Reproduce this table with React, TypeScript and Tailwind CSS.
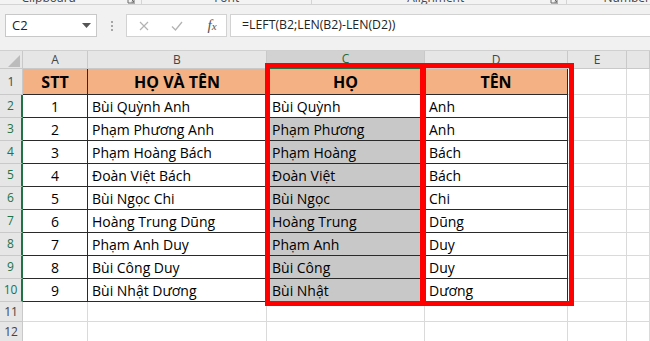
import React from "react";

const people: [string, string, string, string][] = [
  ["1", "Bùi Quỳnh Anh", "Bùi Quỳnh", "Anh"],
  ["2", "Phạm Phương Anh", "Phạm Phương", "Anh"],
  ["3", "Phạm Hoàng Bách", "Phạm Hoàng", "Bách"],
  ["4", "Đoàn Việt Bách", "Đoàn Việt", "Bách"],
  ["5", "Bùi Ngọc Chi", "Bùi Ngọc", "Chi"],
  ["6", "Hoàng Trung Dũng", "Hoàng Trung", "Dũng"],
  ["7", "Phạm Anh Duy", "Phạm Anh", "Duy"],
  ["8", "Bùi Công Duy", "Bùi Công", "Duy"],
  ["9", "Bùi Nhật Dương", "Bùi Nhật", "Dương"],
];

function Launcher() {
  return (
    <svg width="9" height="9" viewBox="0 0 9 9" className="-mt-[5px]">
      <path d="M1 1v7h7" fill="none" stroke="#6b6b6b" strokeWidth="1" />
      <path d="M3.5 3.5l3.5 3.5M7 4.5V7H4.5" fill="none" stroke="#6b6b6b" strokeWidth="1" />
    </svg>
  );
}

function RibbonLabels() {
  return (
    <div className="h-[5px] overflow-hidden bg-[#f3f3f3] border-b border-[#d4d4d4] flex text-[12px] leading-[14px] text-[#444]">
      <div className="w-[150px] flex items-start">
        <span className="flex-1 text-center -mt-[9px] pr-[30px]">Clipboard</span>
        <div className="w-[14px]"><Launcher /></div>
      </div>
      <div className="w-[180px] flex items-start justify-center border-l border-[#d4d4d4]">
        <span className="-mt-[9px]">Font</span>
      </div>
      <div className="w-[270px] flex items-start border-l border-[#d4d4d4]">
        <span className="flex-1 text-center -mt-[9px] pl-[10px]">Alignment</span>
        <div className="w-[16px]"><Launcher /></div>
      </div>
      <div className="flex-1 flex items-start border-l border-[#d4d4d4] pl-[37px]">
        <span className="-mt-[9px]">Number</span>
      </div>
    </div>
  );
}

function FormulaBar() {
  return (
    <div className="h-[45px] bg-[#f1f1f1] flex items-center pl-[5px] pb-[4px]">
      <div className="w-[92px] h-[23px] bg-white border border-[#c8c8c8] flex items-center justify-between pl-[6px] pr-[5px]">
        <span className="text-[13px] text-[#222]">C2</span>
        <svg width="9" height="5" viewBox="0 0 9 5">
          <path d="M0 0h9L4.5 5z" fill="#555" />
        </svg>
      </div>
      <div className="w-[29px] flex flex-col items-center gap-[2px]">
        <span className="w-[2px] h-[2px] bg-[#a6a6a6]" />
        <span className="w-[2px] h-[2px] bg-[#a6a6a6]" />
        <span className="w-[2px] h-[2px] bg-[#a6a6a6]" />
      </div>
      <div className="w-[101px] h-[23px] bg-white border border-[#d2d2d2] flex items-center">
        <div className="w-[33px] flex justify-center">
          <svg width="10" height="10" viewBox="0 0 10 10">
            <path d="M1 1l8 8M9 1L1 9" stroke="#b3b3b3" strokeWidth="1.2" />
          </svg>
        </div>
        <div className="w-[34px] flex justify-center">
          <svg width="12" height="10" viewBox="0 0 12 10">
            <path d="M1 5.5l3.5 3.5L11 1" fill="none" stroke="#b3b3b3" strokeWidth="1.3" />
          </svg>
        </div>
        <div className="flex-1 flex justify-center pl-[4px]">
          <span className="font-['Liberation_Serif',serif] italic text-[15px] leading-none text-[#555]">
            f<span className="text-[11px]">x</span>
          </span>
        </div>
      </div>
      <div className="flex-1 h-[23px] ml-[3px] bg-white border border-[#d2d2d2] border-r-0 flex items-center pl-[11px]">
        <span className="text-[12.3px] text-[#222]">=LEFT(B2;LEN(B2)-LEN(D2))</span>
      </div>
    </div>
  );
}

const colHead = "flex items-center justify-center text-[12px] text-[#444] bg-[#e6e6e6] border-r border-b border-[#c9c9c9]";
const rowHead = "flex items-center justify-center text-[12px] bg-[#e6e6e6] border-b border-[#c9c9c9]";
const table = "flex items-center border-r border-b border-[#2a2a2a] text-[14px] text-black";
const empty = "border-r border-b border-[#dadada]";

function Sheet() {
  return (
    <div className="grid grid-cols-[23px_65px_179px_158px_143px_59px_1fr] grid-rows-[18px_26px_repeat(9,23px)_20px_20px] border-t border-[#d0d0d0]">
      {/* column headers */}
      <div className="bg-[#e6e6e6] border-r border-b border-[#c9c9c9] flex items-end justify-end pr-[2px] pb-[1px]">
        <svg width="12" height="12" viewBox="0 0 12 12">
          <path d="M12 0V12H0z" fill="#bcbcbc" />
        </svg>
      </div>
      <div className={colHead}>A</div>
      <div className={colHead}>B</div>
      <div className="flex items-center justify-center text-[12px] text-[#1d6b43] bg-[#d2d2d2] border-r border-[#c9c9c9] border-b-2 border-b-[#217346]">C</div>
      <div className={colHead}>D</div>
      <div className={colHead}>E</div>
      <div className={colHead}></div>

      {/* row 1: titles */}
      <div className={`${rowHead} text-[#444] border-r border-r-[#c9c9c9]`}>1</div>
      <div className={`${table} justify-center bg-[#f4b183] font-bold text-[16px]`}>STT</div>
      <div className={`${table} justify-center bg-[#f4b183] font-bold text-[16px]`}>HỌ VÀ TÊN</div>
      <div className={`${table} justify-center bg-[#f4b183] font-bold text-[16px]`}>HỌ</div>
      <div className={`${table} justify-center bg-[#f4b183] font-bold text-[16px]`}>TÊN</div>
      <div className={empty}></div>
      <div className={empty}></div>

      {/* rows 2-10: names */}
      {people.map(([n, full, last, first], i) => (
        <React.Fragment key={n}>
          <div className={`${rowHead} text-[#217346] border-r-2 border-r-[#217346] bg-[#dedede]`}>{i + 2}</div>
          <div className={`${table} justify-center`}>{n}</div>
          <div className={`${table} pl-[4px]`}>{full}</div>
          <div className={`${table} pl-[5px] ${i === 0 ? "bg-white" : "bg-[#c8c8c8]"}`}>{last}</div>
          <div className={`${table} pl-[4px]`}>{first}</div>
          <div className={empty}></div>
          <div className={empty}></div>
        </React.Fragment>
      ))}

      {/* rows 11-12: blank */}
      {[11, 12].map((r) => (
        <React.Fragment key={r}>
          <div className={`${rowHead} text-[#444] border-r border-r-[#c9c9c9]`}>{r}</div>
          <div className={empty}></div>
          <div className={empty}></div>
          <div className={empty}></div>
          <div className={empty}></div>
          <div className={empty}></div>
          <div className={empty}></div>
        </React.Fragment>
      ))}
    </div>
  );
}

export default function App() {
  return (
    <div className="relative w-[650px] h-[341px] overflow-hidden bg-white font-['Open_Sans',sans-serif]">
      <RibbonLabels />
      <FormulaBar />
      <Sheet />
      {/* red outlines over the HỌ and TÊN columns */}
      <div className="absolute left-[265px] top-[63px] w-[160px] h-[243px] border-[5px] border-[#ff0000]" />
      <div className="absolute left-[421px] top-[63px] w-[153px] h-[243px] border-[5px] border-[#ff0000]" />
    </div>
  );
}
